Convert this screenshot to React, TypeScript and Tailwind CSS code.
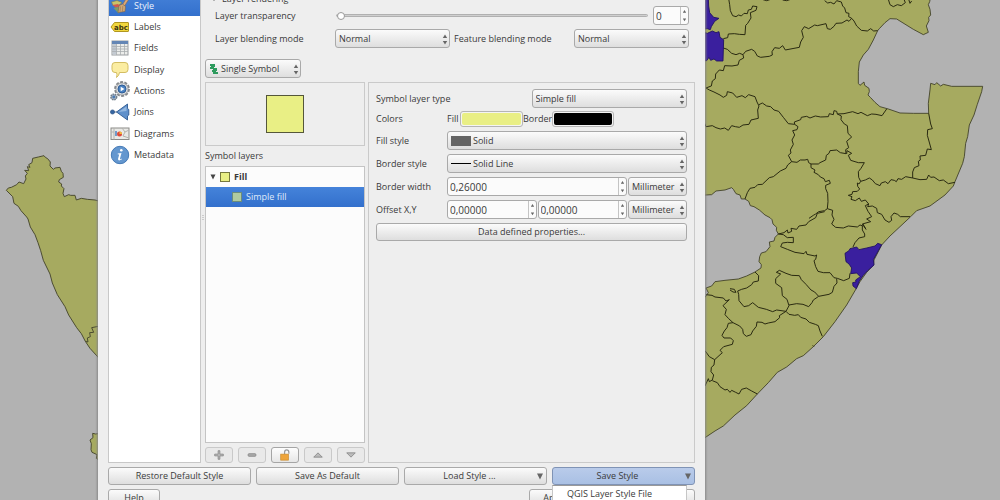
import { useState, type ReactNode } from 'react'

const controlBase =
  'rounded-[3px] border border-[#a9a9a9] bg-linear-to-b from-[#fbfbfb] to-[#dedede] text-[#3a3a3a]'

function MapCanvas() {
  return (
    <svg
      className="absolute inset-0 h-full w-full"
      viewBox="0 0 1000 500"
      preserveAspectRatio="xMidYMid slice"
      aria-hidden="true"
    >
      <rect width="1000" height="500" fill="#b2b2b2" />

      {/* western province */}
      <g transform="translate(0 140) scale(0.33333)" fill="#a6aa60" stroke="#45452c" strokeWidth="2.8">
        <path d="M300 184 L285 180 L262 178 L244 175 L229 180 L225 166 L212 166 L206 164 L193 170 L189 160 L192 146 L184 138 L185 132 L176 126 L178 119 L190 112 L189 100 L184 94 L180 82 L165 84 L160 88 L150 78 L151 66 L143 56 L136 52 L132 47 L115 51 L98 55 L96 68 L86 74 L90 82 L82 80 L86 92 L74 91 L82 100 L76 108 L78 117 L71 131 L57 126 L50 134 L34 142 L25 144 L19 151 L38 170 L42 190 L55 199 L63 212 L80 231 L84 237 L91 261 L105 284 L114 308 L122 332 L130 361 L150 402 L157 429 L172 464 L195 500 L206 525 L230 563 L244 581 L256 604 L270 625 L300 658Z" />
        <path d="M300 558 L275 563 L281 577 L269 578 L271 590 L262 594 L264 606 L256 604" fill="none" />
        <path d="M300 880 L287 882 L278 880 L279 893 L270 900 L274 911 L273 929 L276 937 L285 941 L291 944 L289 955 L300 962Z" />
      </g>

      {/* mainland and its districts */}
      <g transform="translate(700 0) scale(0.33333)" strokeWidth="2.6" stroke="#3f3f26" fill="none">
        <path
          fill="#a6aa60"
          d="M0 -10 L692 -10 L689 5 L685 14 L690 28 L692 45 L686 52 L687 62 L679 78 L685 97 L670 104 L640 88 L590 57 L570 56 L555 68 L538 86 L533 92 L520 120 L505 148 L490 165 L478 186 L475 215 L475 250 L480 256 L492 246 L494 256 L507 265 L508 275 L504 285 L512 293 L525 307 L540 320 L565 327 L600 339 L640 340 L686 340 L685 310 L690 270 L692 250 L705 254 L710 248 L722 258 L730 253 L755 259 L848 259 L845 275 L832 313 L822 345 L808 375 L803 410 L797 430 L793 470 L788 490 L765 545 L760 558 L735 585 L690 618 L650 632 L632 650 L600 680 L570 708 L545 735 L522 780 L521 795 L500 817 L480 845 L468 867 L440 915 L405 965 L370 1010 L340 1040 L310 1067 L290 1076 L260 1101 L232 1117 L205 1148 L172 1182 L140 1217 L105 1245 L70 1278 L45 1293 L15 1313 L0 1320Z"
        />
        <path
          fill="#b2b2b2"
          d="M0 586 L35 584 L48 573 L75 570 L95 563 L100 568 L108 581 L120 585 L124 597 L135 597 L146 604 L151 617 L162 620 L178 630 L195 645 L210 653 L216 659 L219 672 L230 682 L229 691 L235 702 L225 712 L222 723 L208 726 L210 740 L198 755 L184 759 L179 770 L177 785 L184 794 L183 804 L165 816 L140 828 L115 837 L75 841 L45 845 L35 858 L18 864 L25 878 L15 892 L0 900Z"
        />
        <g stroke="#25250f" strokeWidth="2.9">
          <path d="M86 -4 L89 14 L91 32 L98 47 L108 50 L116 45 L124 48 L132 40 L142 41 L145 30 L154 28 L158 18 L171 20 L168 31 L151 38 L153 54 L143 70 L137 76 L135 104 L118 103 L103 101 L85 102 L83 113 L70 116" />
          <path d="M186 -2 L200 2 L212 -2 M248 0 L260 2 L275 -3 M374 2 L383 9 L392 7 L402 12 L410 2 M410 2 L424 6 L428 18 L434 24 L438 38 L447 40 L446 50 L455 55" />
          <path d="M565 -2 L570 14 L580 20 L592 14 L604 17 L616 8 L612 -2 M626 -2 L630 10 L635 3" />
          <path d="M70 144 L82 148 L95 160 L108 164 L119 160 L129 164 L137 154 L155 148 L164 154 L172 168 L182 172 L208 169 L217 165 L216 155 L224 143 L238 145 L248 137 L256 150 L282 145 L298 142 L302 126 L310 112 L305 92 L313 80 L326 86 L344 75 L352 77 L378 71 L382 86 L391 88 L402 79 L408 70 L426 69 L441 60 L447 64 L455 55 L462 63 L470 78 L484 91 L502 93 L512 86 L521 93 L533 92" />
          <path d="M129 164 L131 174 L118 181 L114 195 L96 198 L74 197 L70 212 L58 210 L47 222 L46 236 L37 243 L34 258 L18 264 L28 270 L42 276 L60 285 L70 292 L80 286 L82 275 L98 279 L110 292 L126 287 L136 293 L146 284 L165 290 L171 306 L177 318 L173 330 L175 355 L153 360 L147 373 L129 375 L118 382 L106 380 L95 377 L85 391 L74 384 L61 387 L48 383 L37 377 L18 380 L14 370" />
          <path d="M177 314 L187 309 L200 318 L212 320 L222 330 L236 334 L250 352 L265 371 L284 373 L283 366 L302 359 L304 352 L320 349 L330 354 L346 348 L362 351 L385 350 L388 341 L400 344 L402 332 L410 334 L412 342 L432 341 L458 335 L474 341 L483 337 L502 347 L515 342 L528 343 L546 347 L560 327" />
          <path d="M284 373 L294 380 L291 389 L278 392 L284 405 L276 420 L280 433 L271 450 L273 459 L265 466 L275 485 L263 495 L258 505 L241 513 L220 530 L208 533 L187 553 L173 554 L165 562 L150 565 L142 578 L135 597" />
          <path d="M412 342 L424 348 L423 359 L433 372 L442 377 L444 400 L455 411 L440 424 L446 443 L437 449 L438 461 L421 458 L410 450 L390 452 L387 460 L379 466 L377 480 L360 488 L355 492 L333 492 L326 488 L323 478 L315 480 L301 480 L291 487 L275 485" />
          <path d="M440 462 L441 452 L455 460 L445 466 L452 481 L475 488 L493 488 L483 505 L475 515 L476 532 L482 544 L496 540 L508 534 L517 540 L526 551 L540 557 L544 549 L556 545 L564 551 L573 539 L583 541 L589 545 L594 536 L605 538 L617 530 L638 534" />
          <path d="M686 340 L692 372 L697 386 L683 389 L682 406 L686 420 L694 449 L682 447 L677 466 L660 468 L661 480 L655 484 L657 497 L643 503 L638 516 L638 534 L660 539 L680 538 L686 525 L692 532 L702 531 L718 542 L730 540 L745 551 L765 547" />
          <path d="M333 492 L333 503 L345 510 L342 517 L355 524 L361 531 L372 536 L376 545 L388 541 L391 550 L377 556 L377 566 L383 580 L384 605 L382 626 L374 632 L356 635 L347 642 L340 646 L327 655 M382 626 L398 631 L396 645 L402 658 L395 672 L407 682 L430 684 L445 678 L472 681 L480 675 L489 678" />
          <path d="M482 544 L477 552 L472 549 L473 559 L479 567 L472 574 L458 575 L456 583 L445 586 L456 590 L453 598 L466 602 L478 594 L484 604 L496 600 L506 612 L503 620 L517 618 L530 625 L532 638 L545 643 L555 660 L567 667 L575 661 L573 650 L582 639 L593 643 L601 650 L630 650" />
          <path d="M506 612 L496 617 L504 634 L515 650 L500 657 L512 665 L487 672 L498 688 L489 672 M487 678 L487 690 L494 702 L494 710 L477 714 L465 728 L459 741" />
          <path d="M235 702 L252 698 L262 690 L264 699 L275 694 L273 685 L290 688 L297 678 L318 675 L326 665 L347 653 L352 640 L374 635" />
          <path d="M235 702 L250 704 L262 713 L280 712 L280 728 L262 727 L247 729 L242 740 L262 748 L285 757 L312 761 L318 754 L321 763 L345 768 L350 765 L347 778 L342 782 L347 800 L354 814 L370 818 L390 818 L402 833 L412 835 L431 842 L448 835 L450 820" />
          <path d="M165 816 L176 827 L175 843 L160 846 L155 854 L140 864 L125 868 L113 873 L116 883 L117 902 L132 920 L146 917 L158 908 L175 922 L199 928 L218 935 L230 930 L258 934 L267 917 L261 898 L247 887 L245 863 L227 850 L227 836 L242 822 L229 817 L238 811 L258 820 L275 826 L298 827 L304 839 L318 853 L333 870 L344 876 L356 889 L387 883 L397 877 L402 859 L411 849 L410 836 M356 889 L340 900 L336 908 L326 920 L309 913 L290 911 L267 915" />
          <path d="M90 866 L103 868 L108 877 L99 876 L90 870" />
          <path d="M18 884 L36 886 L45 891 L70 894 L78 903 L88 899 L69 917 L79 928 L75 944 L86 956 L99 968 L119 978 L128 988 L130 1001 L139 1009 L153 1004 L158 993 L169 979 L171 966 L186 967 L195 972 L205 969 L225 965 L239 953 L238 947 L258 934 L267 943 L284 946 L295 944 L302 952 L318 957 L328 967 L346 973 L355 977 L360 993 L367 1009 M338 1036 L342 1040" />
          <path d="M99 968 L85 970 L81 983 L73 993 L66 1006 L72 1014 L92 1014 L100 1022 L97 1033 L71 1040 L60 1051 L67 1058 L44 1079 L42 1095 L34 1102 L33 1115 L41 1125 L37 1140 L28 1145 L25 1136 L15 1158 M15 1052 L28 1070 L44 1079 M37 1142 L52 1148 L60 1160 L75 1170 L82 1168 L90 1177 L95 1171 L107 1177 L117 1182 L125 1168 L139 1164 L155 1173 L172 1182" />
        </g>
        <g fill="#3a1f9e" stroke="#1f1060">
          <path d="M0 -5 L25 -5 L26 18 L29 38 L41 52 L57 55 L44 64 L34 80 L31 89 L22 86 L0 88Z" />
          <path d="M0 94 L22 100 L37 93 L48 98 L57 95 L60 112 L71 119 L69 183 L50 183 L42 177 L32 181 L27 172 L20 182 L0 182Z" />
          <path d="M435 760 L447 752 L450 746 L470 741 L477 749 L500 744 L525 738 L533 730 L545 734 L535 752 L520 779 L522 795 L503 812 L489 827 L478 843 L469 866 L459 858 L458 848 L468 846 L467 840 L481 830 L470 819 L452 821 L455 804 L447 792 L438 785Z" />
        </g>
      </g>
    </svg>
  )
}

function SpinArrows({ className = '' }: { className?: string }) {
  return (
    <svg className={className} width="6" height="11" viewBox="0 0 6 11" fill="#666" aria-hidden="true">
      <path d="M3 0.500 L5.200 4 H0.800Z M0.800 7 H5.200 L3 10.500Z" />
    </svg>
  )
}

type SelectProps = {
  label: string
  value: string
  className?: string
  indent?: string
  icon?: ReactNode
  id?: string
}

function SelectBox({ label, value, className = '', indent = 'pl-[3px]', icon, id }: SelectProps) {
  return (
    <div className={`relative flex items-center ${className}`}>
      <select
        id={id}
        aria-label={label}
        defaultValue={value}
        className={`h-[19px] w-full appearance-none pr-2 ${indent} ${controlBase}`}
      >
        <option>{value}</option>
      </select>
      {icon && <span className="pointer-events-none absolute left-1">{icon}</span>}
      <SpinArrows className="pointer-events-none absolute top-[5px] right-[2px]" />
    </div>
  )
}

function SpinBox({ label, initial, className = '' }: { label: string; initial: string; className?: string }) {
  const [value, setValue] = useState(initial)
  return (
    <div
      className={`flex h-[19px] items-stretch overflow-hidden rounded-[3px] border border-[#a9a9a9] bg-[#fbfbfb] ${className}`}
    >
      <input
        type="text"
        aria-label={label}
        value={value}
        onChange={(e) => setValue(e.target.value)}
        className="w-0 flex-1 bg-transparent pl-[2px] text-[10px] text-[#3a3a3a] outline-none"
      />
      <span className="flex w-2 shrink-0 items-center justify-center border-l border-[#c4c4c4]">
        <svg width="5" height="15" viewBox="0 0 5 15" fill="#666" aria-hidden="true">
          <path d="M2.500 2 L4.200 4.800 H0.800Z M0.800 10.500 H4.200 L2.500 13.300Z" />
        </svg>
      </span>
    </div>
  )
}

const iconProps = { width: 20, height: 20, viewBox: '0 0 20 20', 'aria-hidden': true } as const

function StyleIcon() {
  return (
    <svg {...iconProps}>
      <path d="M1.500 6 L7 4.500 L12 6.500 L8 10 L3 9.500Z" fill="#c9c46c" stroke="#7f7b46" strokeWidth=".6" />
      <path d="M2.500 9 L8 8 L11 10.500 L6 12Z" fill="#cf5a50" />
      <path d="M3.500 12 L8 11 L12 14 L8.500 17.500Z" fill="#7c9c6a" />
      <path d="M17 1.500 L19 3 L14.500 10 L12.500 8.500Z" fill="#dba876" stroke="#8b5e38" strokeWidth=".5" />
      <path d="M9 9.500 L12.500 8 L15.500 10.500 L15 15.500 L8 16.500Z" fill="#d0a878" stroke="#806143" strokeWidth=".6" />
      <path d="M10.500 10.500 L10 15.500 M12.800 10 L12.500 15.500" stroke="#92704c" strokeWidth=".6" />
    </svg>
  )
}

function LabelsIcon() {
  return (
    <svg {...iconProps}>
      <path
        d="M1 10 L4.500 5.500 H18 Q18.500 5.500 18.500 6 V14 Q18.500 14.500 18 14.500 H4.500Z"
        fill="#f1d73e"
        stroke="#b0961f"
      />
      <text x="4" y="12.500" fontSize="7" fontWeight="700" fontFamily="DejaVu Sans, sans-serif" fill="#3d3510">
        abc
      </text>
    </svg>
  )
}

function FieldsIcon() {
  return (
    <svg {...iconProps}>
      <rect x="2" y="3" width="16" height="14" fill="#ecedeb" stroke="#9a9da0" />
      <rect x="2" y="3" width="16" height="3" fill="#6486b5" />
      <rect x="2.500" y="6" width="4" height="10.500" fill="#c3cad2" />
      <path d="M6.500 6V17 M10.500 6V17 M14.500 6V17 M2 8.500H18 M2 11H18 M2 13.500H18" stroke="#a9adb0" strokeWidth=".8" />
    </svg>
  )
}

function DisplayIcon() {
  return (
    <svg {...iconProps}>
      <path
        d="M5 2.500 H15 Q18 2.500 18 5.500 V9.500 Q18 12.500 15 12.500 H9.500 Q9 16 6.500 17.500 Q7.500 14.500 6.500 12.500 H5 Q2 12.500 2 9.500 V5.500 Q2 2.500 5 2.500Z"
        fill="#fbeda2"
        stroke="#d3bd62"
      />
    </svg>
  )
}

function ActionsIcon() {
  return (
    <svg {...iconProps}>
      <circle cx="12" cy="8" r="7" fill="#e2e3e4" stroke="#85888c" strokeWidth="1.800" strokeDasharray="3 1.400" />
      <circle cx="12" cy="8" r="6" fill="#d9dbdd" stroke="#8a8d91" strokeWidth=".6" />
      <circle cx="12" cy="8" r="4" fill="#4a82c2" stroke="#2d5c97" />
      <path d="M10.700 5.800 L14.500 8 L10.700 10.200Z" fill="#fff" />
      <circle cx="3.800" cy="16" r="2.900" fill="#a7b3c1" stroke="#707d8b" strokeWidth="1.400" strokeDasharray="1.600 .8" />
      <circle cx="3.800" cy="16" r="1.400" fill="#4a7ab3" />
    </svg>
  )
}

function JoinsIcon() {
  return (
    <svg {...iconProps}>
      <path d="M4 10 H8" stroke="#6c7d92" />
      <circle cx="2.500" cy="10" r="2.100" fill="#3565a2" stroke="#234a7d" strokeWidth=".6" />
      <path d="M6.500 10 L17.500 2 V6.500 L18.800 7.500 V13 L17.500 14 V18Z" fill="#5f90cb" stroke="#2f5a92" strokeWidth=".9" />
      <path d="M8.500 10 L16.500 4.500 V9Z" fill="#93b7e0" />
    </svg>
  )
}

function DiagramsIcon() {
  return (
    <svg {...iconProps}>
      <rect x="1" y="4" width="18" height="11.500" fill="#e9e9e6" stroke="#8b8b88" />
      <path d="M4 4V15.500 M1 8H4 M12 4 L15 8 L13 12 L19 14 M15 8 L19 6" fill="none" stroke="#b3b3ae" />
      <circle cx="9.500" cy="10" r="2.500" fill="#de4b3b" />
      <path d="M9.500 10 V7.500 A2.500 2.500 0 0 1 12 10Z" fill="#f0bd3a" />
      <path d="M6 7V12" stroke="#4a7fc1" strokeWidth="1.500" />
    </svg>
  )
}

function MetadataIcon() {
  return (
    <svg {...iconProps}>
      <circle cx="10" cy="10" r="8.700" fill="#6497cf" stroke="#457ab6" />
      <circle cx="11.300" cy="5.300" r="1.300" fill="#fff" />
      <path
        d="M7.800 8.500 L11.500 8 L10 13.600 Q10 14.800 12 13.500 L11.700 14.600 Q8 16.500 8 14 L9.200 9.500 L7.600 9.300Z"
        fill="#fff"
      />
    </svg>
  )
}

const pages = [
  { name: 'Labels', icon: <LabelsIcon /> },
  { name: 'Fields', icon: <FieldsIcon /> },
  { name: 'Display', icon: <DisplayIcon /> },
  { name: 'Actions', icon: <ActionsIcon /> },
  { name: 'Joins', icon: <JoinsIcon /> },
  { name: 'Diagrams', icon: <DiagramsIcon /> },
  { name: 'Metadata', icon: <MetadataIcon /> },
]

function Sidebar() {
  return (
    <nav className="w-[93px] shrink-0 border-x border-b border-[#c8c8c8] bg-white">
      <button
        type="button"
        aria-current="page"
        className="flex h-7 w-full items-center gap-1 bg-linear-to-b from-[#4a86dc] to-[#3370cc] pt-2 pl-px text-left text-[#eef4fd]"
      >
        <StyleIcon />
        Style
      </button>
      <ul className="grid h-[150px] auto-rows-fr">
        {pages.map((page) => (
          <li key={page.name} className="flex">
            <button type="button" className="flex w-full items-center gap-1 pl-px text-left">
              {page.icon}
              {page.name}
            </button>
          </li>
        ))}
      </ul>
    </nav>
  )
}

function LayerRendering() {
  return (
    <section className="shrink-0 pr-[6px] pl-[10px]">
      <h2 className="-ml-1 flex h-[18px] items-end gap-[5px]">
        <svg className="mb-1" width="6" height="6" viewBox="0 0 6 6" fill="#555" aria-hidden="true">
          <path d="M0 1H6L3 5Z" />
        </svg>
        Layer rendering
      </h2>
      <div className="flex h-[19px] items-center">
        <label htmlFor="transparency" className="w-[121px] shrink-0">
          Layer transparency
        </label>
        <input
          id="transparency"
          type="range"
          min="0"
          max="100"
          defaultValue="0"
          className="h-[3px] min-w-0 flex-1 appearance-none rounded-full border border-[#b0b0b0] bg-[#cfcfcf] [&::-webkit-slider-thumb]:h-2 [&::-webkit-slider-thumb]:w-2 [&::-webkit-slider-thumb]:appearance-none [&::-webkit-slider-thumb]:rounded-full [&::-webkit-slider-thumb]:border [&::-webkit-slider-thumb]:border-[#999] [&::-webkit-slider-thumb]:bg-white"
        />
        <SpinBox label="Transparency value" initial="0" className="ml-[5px] w-9" />
      </div>
      <div className="mt-1 flex h-[19px] items-center">
        <label htmlFor="layer-blend" className="w-[120px] shrink-0">
          Layer blending mode
        </label>
        <SelectBox id="layer-blend" label="Layer blending mode" value="Normal" className="min-w-0 flex-1" />
        <label htmlFor="feature-blend" className="ml-1 w-[120px] shrink-0">
          Feature blending mode
        </label>
        <SelectBox id="feature-blend" label="Feature blending mode" value="Normal" className="min-w-0 flex-1" />
      </div>
    </section>
  )
}

const layerTools = [
  {
    name: 'Add symbol layer',
    disabled: true,
    drawing: <path d="M6 2h2v4h4v2H8v4H6V8H2V6h4z" fill="#bbb" stroke="#888" />,
  },
  {
    name: 'Remove symbol layer',
    disabled: true,
    drawing: <rect x="2.500" y="5.500" width="9" height="3" rx="1" fill="#aaa" stroke="#888" />,
  },
  {
    name: 'Lock layer colour',
    disabled: false,
    drawing: (
      <>
        <path d="M6.500 6V4Q6.500 1 9 1Q11.500 1 11.500 4V5.500" fill="none" stroke="#999" strokeWidth="1.400" />
        <rect x="2" y="6" width="9" height="7" fill="#eea43a" stroke="#c98a2b" strokeWidth=".8" />
      </>
    ),
  },
  { name: 'Move up', disabled: true, drawing: <path d="M2 9.500L7 4.500L12 9.500Z" fill="#bbb" stroke="#888" /> },
  { name: 'Move down', disabled: true, drawing: <path d="M2 4.500L7 9.500L12 4.500Z" fill="#bbb" stroke="#888" /> },
]

function SymbolTree() {
  return (
    <div className="flex w-[160px] shrink-0 flex-col">
      <div className="flex h-16 shrink-0 items-center justify-center border border-[#cacaca]">
        <div className="h-[38px] w-[38px] border border-[#55573a] bg-[#e9ef85]" />
      </div>
      <h3 className="flex h-5 shrink-0 items-center">Symbol layers</h3>
      <ul className="min-h-0 flex-1 border border-[#c4c4c4] bg-[#fcfcfc]">
        <li className="flex h-5 items-center font-bold">
          <svg className="mr-1 ml-1" width="6" height="6" viewBox="0 0 6 6" fill="#444" aria-hidden="true">
            <path d="M0.500 0.500H5.500L3 5.500Z" />
          </svg>
          <span className="mr-1 h-[10px] w-[10px] border border-[#77793f] bg-[#e9ef85]" />
          Fill
        </li>
        <li className="flex h-5 items-center bg-linear-to-b from-[#4583da] to-[#3370cc] pl-[26px] text-[#dfeafa]">
          <span className="mr-1 h-[10px] w-[10px] border border-[#6a8c7c] bg-[#b0cba0]" />
          Simple fill
        </li>
      </ul>
      <div className="mt-1 flex shrink-0 justify-between">
        {layerTools.map((tool) => (
          <button
            key={tool.name}
            type="button"
            aria-label={tool.name}
            disabled={tool.disabled}
            className={`flex h-4 w-7 items-center justify-center rounded-[3px] border ${
              tool.disabled
                ? 'border-[#c9c9c9] bg-[#e9e9e9]'
                : 'border-[#a5a5a5] bg-linear-to-b from-[#fdfdfd] to-[#e6e6e6]'
            }`}
          >
            <svg width="12" height="12" viewBox="0 0 14 14" aria-hidden="true">
              {tool.drawing}
            </svg>
          </button>
        ))}
      </div>
    </div>
  )
}

const rowLabel = 'w-[71px] shrink-0'

function SymbolProperties() {
  return (
    <div className="flex min-w-0 flex-1 flex-col border border-[#cacaca] pt-[6px] pr-[7px] pl-[7px]">
      <div className="flex items-center justify-between">
        <label htmlFor="layer-type">Symbol layer type</label>
        <SelectBox id="layer-type" label="Symbol layer type" value="Simple fill" className="w-1/2" />
      </div>
      <div className="mt-[3px] flex h-4 items-center">
        <span className={rowLabel}>Colors</span>
        <span className="w-[13px] shrink-0">Fill</span>
        <button
          type="button"
          aria-label="Fill color"
          className="h-4 w-[63px] rounded-[3px] border border-[#b5b5b5] bg-[#f4f4f4] p-px"
        >
          <span className="block h-full rounded-[2px] bg-[#e9ef85]" />
        </button>
        <span className="w-[29px] shrink-0">Border</span>
        <button
          type="button"
          aria-label="Border color"
          className="h-4 w-[62px] rounded-[3px] border border-[#b5b5b5] bg-[#f4f4f4] p-px"
        >
          <span className="block h-full rounded-[2px] bg-black" />
        </button>
      </div>
      <div className="mt-1 flex flex-col gap-1">
        <div className="flex items-center">
          <label htmlFor="fill-style" className={rowLabel}>
            Fill style
          </label>
          <SelectBox
            id="fill-style"
            label="Fill style"
            value="Solid"
            indent="pl-[25px]"
            className="min-w-0 flex-1"
            icon={<span className="block h-[10px] w-5 bg-[#646464]" />}
          />
        </div>
        <div className="flex items-center">
          <label htmlFor="border-style" className={rowLabel}>
            Border style
          </label>
          <SelectBox
            id="border-style"
            label="Border style"
            value="Solid Line"
            indent="pl-[25px]"
            className="min-w-0 flex-1"
            icon={<span className="block h-px w-5 bg-black" />}
          />
        </div>
        <div className="flex items-center">
          <span className={rowLabel}>Border width</span>
          <SpinBox label="Border width" initial="0,26000" className="min-w-0 flex-1" />
          <SelectBox label="Border width unit" value="Millimeter" className="ml-[1px] w-[59px]" />
        </div>
        <div className="flex items-center">
          <span className={rowLabel}>Offset X,Y</span>
          <SpinBox label="Offset X" initial="0,00000" className="min-w-0 flex-1" />
          <SpinBox label="Offset Y" initial="0,00000" className="ml-[1px] min-w-0 flex-1" />
          <SelectBox label="Offset unit" value="Millimeter" className="ml-[1px] w-[59px]" />
        </div>
        <button type="button" className={`h-[18px] ${controlBase}`}>
          Data defined properties...
        </button>
      </div>
    </div>
  )
}

function MenuArrow() {
  return (
    <svg className="absolute top-[5px] right-[3px]" width="6" height="7" viewBox="0 0 6 7" fill="#666" aria-hidden="true">
      <path d="M0 0.500H6L3 6.500Z" />
    </svg>
  )
}

function StyleButtons() {
  return (
    <div className="mt-1 grid shrink-0 grid-cols-4 gap-[5px]">
      <button type="button" className={`h-[18px] ${controlBase}`}>
        Restore Default Style
      </button>
      <button type="button" className={`h-[18px] ${controlBase}`}>
        Save As Default
      </button>
      <button type="button" className={`relative h-[18px] pr-3 ${controlBase}`}>
        Load Style ...
        <MenuArrow />
      </button>
      <div className="relative">
        <button
          type="button"
          aria-haspopup="menu"
          aria-expanded="true"
          className="relative h-[18px] w-full rounded-[3px] border border-[#7f93b5] bg-linear-to-b from-[#b9cbea] to-[#a9c0e4] pr-3 text-[#3a3a3a]"
        >
          Save Style
          <MenuArrow />
        </button>
        <div
          role="menu"
          className="absolute top-[18px] right-2 left-0 z-10 border border-[#c6c6c6] border-t-[#999] bg-white pb-2"
        >
          <button type="button" role="menuitem" className="block h-4 w-full pl-[14px] text-left">
            QGIS Layer Style File
          </button>
        </div>
      </div>
    </div>
  )
}

export default function App() {
  return (
    <div className="relative h-screen overflow-hidden bg-[#b2b2b2] pr-[29.5%] pl-[9.8%] font-['Open_Sans','Noto_Sans',sans-serif] text-[9px] leading-[14px] font-medium text-[#3a3a3a]">
      <MapCanvas />
      {/* the window is taller than the screen, so both of its ends run off */}
      <main className="relative -mt-3 flex h-[calc(100vh+19px)] flex-col bg-[#eeeeee] px-[10px] shadow-[0_0_2px_1px_#888]">
        <div className="flex min-h-0 flex-1">
          <Sidebar />
          <div className="flex w-1 shrink-0 flex-col items-center justify-center gap-px pb-4" aria-hidden="true">
            <span className="h-px w-[2px] bg-[#ccc]" />
            <span className="h-px w-[2px] bg-[#ccc]" />
            <span className="h-px w-[2px] bg-[#ccc]" />
          </div>
          <div className="flex min-w-0 flex-1 flex-col">
            <LayerRendering />
            <SelectBox
              label="Renderer"
              value="Single Symbol"
              indent="pl-[15px]"
              className="mt-[11px] w-24 shrink-0"
              icon={
                <svg width="9" height="10" viewBox="0 0 9 10" aria-hidden="true">
                  <path d="M1 0H6V3H5V4H8V7H7V8H9V10H4V8H3V6H4V5H1V3H2V2H1Z" fill="#2e9b5e" />
                </svg>
              }
            />
            <div className="mt-1 flex min-h-0 flex-1 gap-[3px]">
              <SymbolTree />
              <SymbolProperties />
            </div>
          </div>
        </div>
        <StyleButtons />
        <div className="mt-1 flex shrink-0 gap-[5px]">
          <button type="button" className={`mr-auto h-[18px] w-[52px] ${controlBase}`}>
            Help
          </button>
          <button type="button" className={`h-[18px] w-[52px] ${controlBase}`}>
            Apply
          </button>
          <button type="button" aria-label="Cancel" className={`h-[18px] w-[52px] ${controlBase}`} />
          <button type="button" aria-label="OK" className={`h-[18px] w-[52px] ${controlBase}`} />
        </div>
      </main>
    </div>
  )
}
